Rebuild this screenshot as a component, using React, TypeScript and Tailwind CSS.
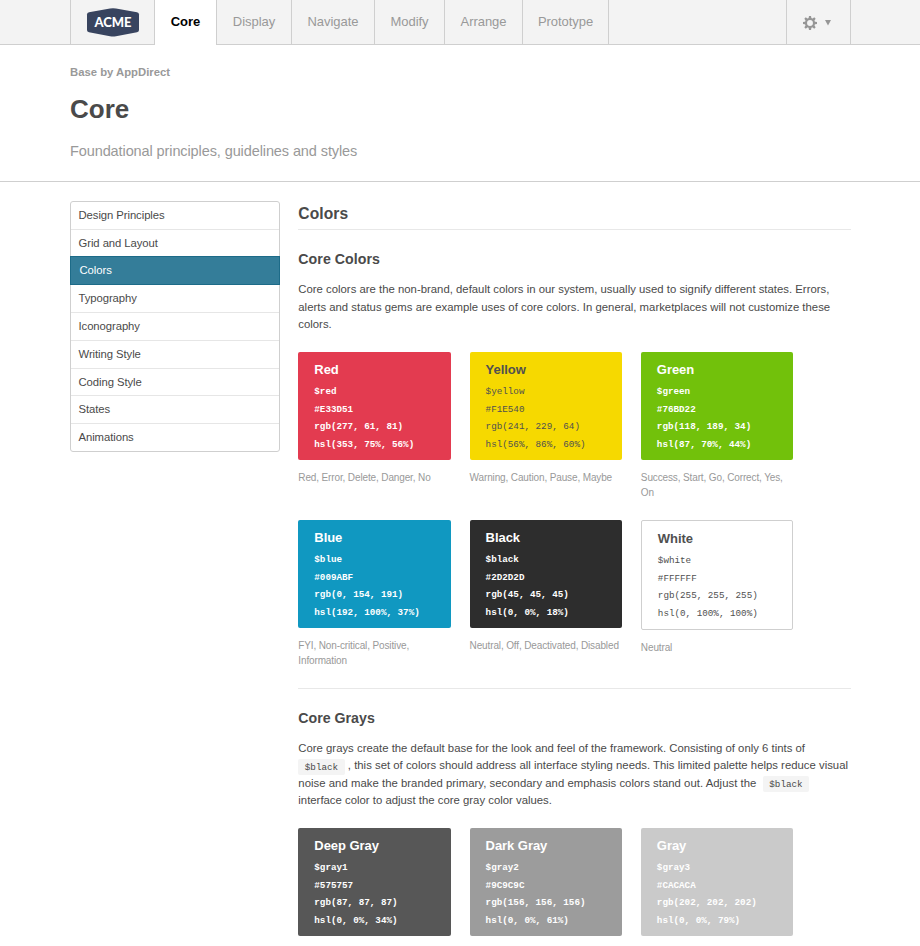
import React from "react";

type Swatch = {
  name: string;
  lines: string[];
  box: string;
  light?: boolean;
  note?: string;
};

const tabs = [
  { label: "Display", width: "w-[75px]" },
  { label: "Navigate", width: "w-[83px]" },
  { label: "Modify", width: "w-[70px]" },
  { label: "Arrange", width: "w-[78px]" },
  { label: "Prototype", width: "w-[86px]" },
];

const menu = [
  "Design Principles",
  "Grid and Layout",
  "Colors",
  "Typography",
  "Iconography",
  "Writing Style",
  "Coding Style",
  "States",
  "Animations",
];

const coreColors: Swatch[] = [
  { name: "Red", lines: ["$red", "#E33D51", "rgb(277, 61, 81)", "hsl(353, 75%, 56%)"], box: "bg-[#e33b50]", note: "Red, Error, Delete, Danger, No" },
  { name: "Yellow", lines: ["$yellow", "#F1E540", "rgb(241, 229, 64)", "hsl(56%, 86%, 60%)"], box: "bg-[#f6d900]", light: true, note: "Warning, Caution, Pause, Maybe" },
  { name: "Green", lines: ["$green", "#76BD22", "rgb(118, 189, 34)", "hsl(87, 70%, 44%)"], box: "bg-[#72c10b]", note: "Success, Start, Go, Correct, Yes, On" },
  { name: "Blue", lines: ["$blue", "#009ABF", "rgb(0, 154, 191)", "hsl(192, 100%, 37%)"], box: "bg-[#1098c1]", note: "FYI, Non-critical, Positive, Information" },
  { name: "Black", lines: ["$black", "#2D2D2D", "rgb(45, 45, 45)", "hsl(0, 0%, 18%)"], box: "bg-[#2d2d2d]", note: "Neutral, Off, Deactivated, Disabled" },
  { name: "White", lines: ["$white", "#FFFFFF", "rgb(255, 255, 255)", "hsl(0, 100%, 100%)"], box: "bg-white border border-[#cfcfcf]", light: true, note: "Neutral" },
];

const grays: Swatch[] = [
  { name: "Deep Gray", lines: ["$gray1", "#575757", "rgb(87, 87, 87)", "hsl(0, 0%, 34%)"], box: "bg-[#575757]" },
  { name: "Dark Gray", lines: ["$gray2", "#9C9C9C", "rgb(156, 156, 156)", "hsl(0, 0%, 61%)"], box: "bg-[#9c9c9c]" },
  { name: "Gray", lines: ["$gray3", "#CACACA", "rgb(202, 202, 202)", "hsl(0, 0%, 79%)"], box: "bg-[#cacaca]" },
];

const mono = "font-['Liberation_Mono','Courier_New',monospace]";

function Card({ swatch }: { swatch: Swatch }) {
  return (
    <div>
      <div
        className={`rounded-[2px] px-4 pt-[7.5px] pb-[7px] ${swatch.box} ${swatch.light ? "text-[#505050]" : "text-white"}`}
      >
        <h4 className="h-[23.5px] text-[13px] leading-5 font-bold tracking-[-0.05px]">{swatch.name}</h4>
        {swatch.lines.map((line) => (
          <div
            key={line}
            className={`${mono} text-[9.25px] leading-[17.5px] whitespace-nowrap ${swatch.light ? "" : "font-bold"}`}
          >
            {line}
          </div>
        ))}
      </div>
      {swatch.note && (
        <p className="mt-[10px] text-[10px] leading-[15px] tracking-[-0.13px] text-[#999]">{swatch.note}</p>
      )}
    </div>
  );
}

function Code() {
  return (
    <code className={`${mono} rounded-[2px] bg-[#f4f4f4] px-[6.5px] py-[2.5px] text-[9.25px] leading-none`}>$black</code>
  );
}

function Gear() {
  const teeth = [0, 45, 90, 135, 180, 225, 270, 315];
  return (
    <svg width="14" height="14" viewBox="0 0 14 14" fill="#969696" className="mt-px">
      {teeth.map((a) => (
        <path key={a} d="M5.4 3.2 6 0H8L8.6 3.2Z" transform={`rotate(${a} 7 7)`} />
      ))}
      <circle cx="7" cy="7" r="4" fill="none" stroke="#969696" strokeWidth="2.1" />
    </svg>
  );
}

export default function App() {
  return (
    <div className="h-[946px] w-[920px] overflow-hidden bg-white font-['Liberation_Sans',Arial,sans-serif] text-[#4a4a4a]">
      <header className="flex h-[45px] bg-[#f3f3f3] text-[13px] text-[#999]">
        <div className="w-[70px] border-b border-[#cfcfcf]" />
        <div className="flex w-[85px] justify-center border-x border-b border-[#cfcfcf] pt-2">
          <svg width="54" height="29" viewBox="0 0 54 29">
            <path d="M3 4.3 24 .5Q27 0 30 .5L51 4.3Q53 4.8 53 6.5V22Q53 23.8 51 24.3L30 28.3Q27 28.8 24 28.3L3 24.3Q1 23.8 1 22V6.5Q1 4.8 3 4.3Z" fill="#38445f" />
            <text x="8.5" y="19" fill="white" fontFamily="Lato, sans-serif" fontSize="12.8" fontWeight="900" textLength="37" lengthAdjust="spacingAndGlyphs">ACME</text>
          </svg>
        </div>
        <div className="w-[61px] bg-white pt-3 text-center leading-5 font-bold text-black">Core</div>
        <nav className="flex border-b border-l border-[#cfcfcf] tracking-[-0.05px]">
          {tabs.map((tab) => (
            <div key={tab.label} className={`border-r border-[#cfcfcf] pt-3 text-center leading-5 ${tab.width}`}>
              {tab.label}
            </div>
          ))}
        </nav>
        <div className="flex-1 border-b border-[#cfcfcf]" />
        <div className="flex w-[65px] items-center gap-[7.5px] border-x border-b border-[#cfcfcf] pl-4">
          <Gear />
          <svg width="6" height="6" viewBox="0 0 6 6" className="mt-px">
            <path d="M0 0H6L3 5.5Z" fill="#969696" />
          </svg>
        </div>
        <div className="w-[69px] border-b border-[#cfcfcf]" />
      </header>

      <section className="h-[137px] border-b border-[#cfcfcf] pt-[19px] pl-[70px]">
        <p className="text-[11.3px] leading-[17px] font-bold text-[#999]">Base by AppDirect</p>
        <h1 className="mt-3 text-[26px] leading-8 font-bold">Core</h1>
        <p className="mt-4 text-[14.5px] leading-5 tracking-[-0.1px] text-[#999]">Foundational principles, guidelines and styles</p>
      </section>

      <div className="flex pt-[19px] pl-[70px]">
        <aside className="w-[209.5px] shrink-0 self-start rounded-[3px] border border-[#cfcfcf] text-[11.3px] tracking-[-0.07px]">
          {menu.map((item) =>
            item === "Colors" ? (
              <div key={item} className="-mx-px -mt-[1.25px] h-[29px] border border-[#1d6b88] bg-[#347d99] px-[8.5px] leading-[27px] text-white">
                {item}
              </div>
            ) : (
              <div key={item} className="h-[27.75px] border-b border-[#e6e6e6] px-[7.5px] leading-[27px] last:h-[26.75px] last:border-b-0">
                {item}
              </div>
            )
          )}
        </aside>

        <main className="ml-[18.8px] w-[552.5px]">
          <h2 className="h-[29px] border-b border-[#e8e8e8] pt-px text-[15.6px] leading-[23px] font-bold tracking-[0.08px]">Colors</h2>
          <section>
            <h3 className="mt-[18px] text-[14.2px] leading-[22px] font-bold tracking-[0.05px]">Core Colors</h3>
            <p className="mt-[11px] text-[11.34px] leading-[17.5px] tracking-[0.01px]">
              Core colors are the non-brand, default colors in our system, usually used to signify different states. Errors,
              <br />
              alerts and status gems are example uses of core colors. In general, marketplaces will not customize these
              <br />
              colors.
            </p>
            <div className="mt-[18.5px] grid grid-cols-[152.4px_152.4px_152.4px] gap-x-[18.9px] gap-y-5">
              {coreColors.map((swatch) => (
                <Card key={swatch.name} swatch={swatch} />
              ))}
            </div>
          </section>
          <section className="mt-5 border-t border-[#e8e8e8]">
            <h3 className="mt-[18px] text-[14.2px] leading-[22px] font-bold">Core Grays</h3>
            <p className="mt-[10.5px] text-[11.34px] leading-[17.5px] tracking-[0.01px]">
              Core grays create the default base for the look and feel of the framework. Consisting of only 6 tints of
              <br />
              <Code /> , this set of colors should address all interface styling needs. This limited palette helps reduce visual
              <br />
              <span className="tracking-[0.035px]">noise and make the branded primary, secondary and emphasis colors stand out. Adjust the&nbsp; </span><Code />
              <br />
              interface color to adjust the core gray color values.
            </p>
            <div className="mt-[18.5px] grid grid-cols-[152.4px_152.4px_152.4px] gap-x-[18.9px]">
              {grays.map((swatch) => (
                <Card key={swatch.name} swatch={swatch} />
              ))}
            </div>
          </section>
        </main>
      </div>
    </div>
  );
}
